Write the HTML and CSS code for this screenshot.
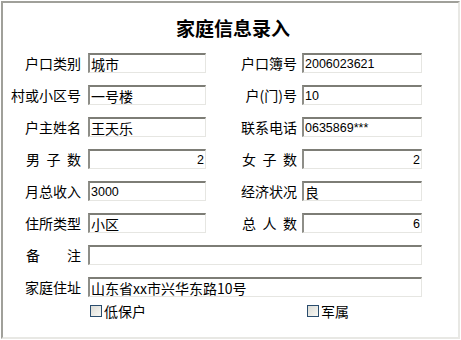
FILE: index.html
```html
<!DOCTYPE html>
<html lang="zh-CN">
<head>
    <meta charset="UTF-8">
    <title>家庭信息录入</title>
    <link rel="stylesheet" href="styles.css">
</head>
<body>
    <div class="panel">
        <h1 class="title">家庭信息录入</h1>
        <form class="grid">
            <label class="lbl">户口类别</label>
            <input class="field" type="text" value="城市">
            <label class="lbl">户口簿号</label>
            <input class="field latin" type="text" value="2006023621">

            <label class="lbl">村或小区号</label>
            <input class="field" type="text" value="一号楼">
            <label class="lbl">户(门)号</label>
            <input class="field latin" type="text" value="10">

            <label class="lbl">户主姓名</label>
            <input class="field" type="text" value="王天乐">
            <label class="lbl">联系电话</label>
            <input class="field latin" type="text" value="0635869***">

            <label class="lbl"><span class="spread">男子数</span></label>
            <input class="field latin num" type="text" value="2">
            <label class="lbl"><span class="spread">女子数</span></label>
            <input class="field latin num" type="text" value="2">

            <label class="lbl">月总收入</label>
            <input class="field latin" type="text" value="3000">
            <label class="lbl">经济状况</label>
            <input class="field" type="text" value="良">

            <label class="lbl">住所类型</label>
            <input class="field" type="text" value="小区">
            <label class="lbl"><span class="spread">总人数</span></label>
            <input class="field latin num" type="text" value="6">

            <label class="lbl"><span class="spread">备注</span></label>
            <input class="field wide" type="text" value="">

            <label class="lbl">家庭住址</label>
            <input class="field wide" type="text" value="山东省xx市兴华东路10号">
        </form>
        <div class="checks">
            <label class="check first"><span class="box"></span>低保户</label>
            <label class="check second"><span class="box"></span>军属</label>
        </div>
    </div>
</body>
</html>
```

FILE: styles.css
```css
body {
    margin: 0;
    padding: 1px;
    background-color: #fff;
    font-family: "Noto Sans CJK SC", sans-serif;
    color: #000;
}
.panel {
    height: 334px;
    border-style: solid;
    border-width: 2px;
    border-color: #a0a09a #e8e8e4 #e8e8e4 #a0a09a;
    background-color: #fff;
}
.title {
    margin: 0;
    padding: 13px 0 0 5px;
    height: 37px;
    font-size: 19px;
    line-height: 24px;
    font-weight: bold;
    text-align: center;
}
.grid {
    display: grid;
    grid-template-columns: 85px 118px 96px 120px;
    grid-auto-rows: 20px;
    row-gap: 12px;
}
.lbl {
    font-size: 14px;
    line-height: 20px;
    text-align: right;
    white-space: nowrap;
}
.grid .lbl:nth-child(4n+1) {
    padding-right: 7px;
}
.grid .lbl:nth-child(4n+3) {
    padding-right: 5px;
}
.spread {
    display: inline-block;
    width: 55px;
    text-align: justify;
    text-align-last: justify;
}
.field {
    box-sizing: border-box;
    width: 100%;
    height: 20px;
    margin: 0;
    padding: 0 1px 0 1px;
    border-style: solid;
    border-width: 2px 1px 1px 2px;
    border-color: #7d7d76 #e6e6e2 #e6e6e2 #8e8e88;
    background-color: #fff;
    font-family: "Noto Sans CJK SC", sans-serif;
    font-size: 14px;
    color: #000;
    outline: none;
}
.latin {
    font-family: "Liberation Sans", "Noto Sans CJK SC", sans-serif;
    font-size: 12.5px;
}
.num {
    text-align: right;
}
.wide {
    grid-column: 2 / 5;
}
.grid .wide + .lbl {
    padding-right: 7px;
}
.checks {
    display: grid;
    grid-template-columns: 85px 118px 96px 120px;
    margin-top: 4px;
    height: 20px;
}
.check {
    display: flex;
    align-items: center;
    gap: 2px;
    font-size: 14px;
}
.first {
    grid-column: 2;
    padding-left: 2px;
}
.second {
    grid-column: 4;
    padding-left: 5px;
}
.box {
    box-sizing: border-box;
    width: 12px;
    height: 12px;
    border: 1px solid #2a4d6e;
    background: linear-gradient(135deg, #dcdcd6, #f8f8f4);
}
```
